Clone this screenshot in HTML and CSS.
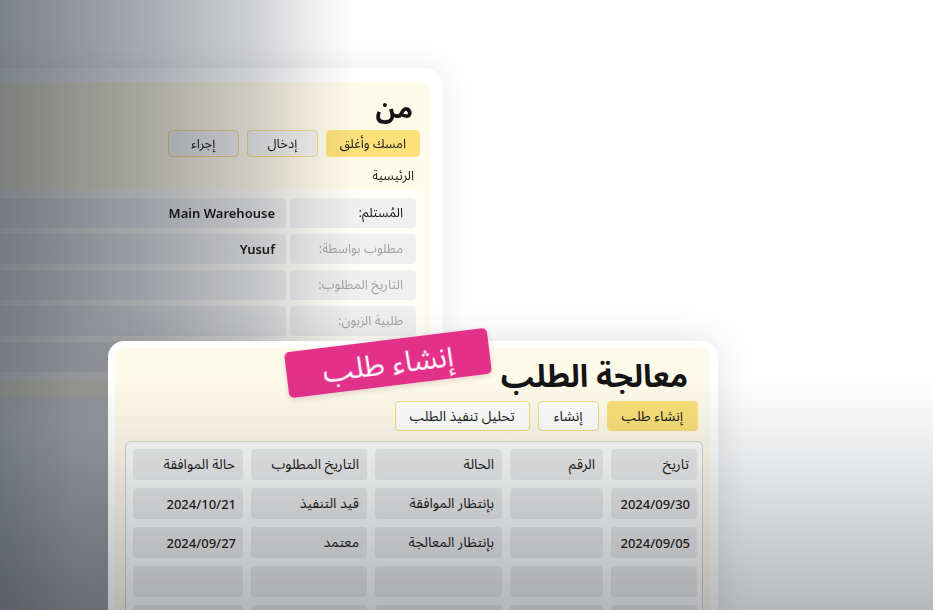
FILE: index.html
```html
<!DOCTYPE html>
<html lang="ar" dir="rtl">
<head>
<meta charset="utf-8">
<title>معالجة الطلب</title>
<link rel="stylesheet" href="styles.css">
</head>
<body>
<div class="stage">
  <section class="window window-back">
    <div class="panel panel-back">
      <h1 class="title title-sm">من</h1>
      <div class="actions actions-sm">
        <span class="btn btn-primary">امسك وأغلق</span>
        <span class="btn btn-muted">إدخال</span>
        <span class="btn btn-muted">إجراء</span>
      </div>
      <div class="section-label">الرئيسية</div>
      <div class="form">
        <div class="form-row">
          <div class="form-label form-label-strong">المُستلم:</div>
          <div class="form-value">Main Warehouse</div>
        </div>
        <div class="form-row">
          <div class="form-label">مطلوب بواسطة:</div>
          <div class="form-value">Yusuf</div>
        </div>
        <div class="form-row">
          <div class="form-label">التاريخ المطلوب:</div>
          <div class="form-value"></div>
        </div>
        <div class="form-row">
          <div class="form-label">طلبية الزبون:</div>
          <div class="form-value"></div>
        </div>
        <div class="form-row">
          <div class="form-label"></div>
          <div class="form-value"></div>
        </div>
      </div>
    </div>
  </section>

  <div class="shade-left"></div>

  <section class="window window-front">
    <div class="panel panel-front">
      <h1 class="title title-lg">معالجة الطلب</h1>
      <div class="actions actions-lg">
        <span class="btn btn-primary">إنشاء طلب</span>
        <span class="btn btn-outline">إنشاء</span>
        <span class="btn btn-outline">تحليل تنفيذ الطلب</span>
      </div>
      <div class="table">
        <div class="cell">تاريخ</div>
        <div class="cell">الرقم</div>
        <div class="cell">الحالة</div>
        <div class="cell">التاريخ المطلوب</div>
        <div class="cell">حالة الموافقة</div>

        <div class="cell cell-num">2024/09/30</div>
        <div class="cell"></div>
        <div class="cell">بإنتظار الموافقة</div>
        <div class="cell">قيد التنفيذ</div>
        <div class="cell cell-num">2024/10/21</div>

        <div class="cell cell-num">2024/09/05</div>
        <div class="cell"></div>
        <div class="cell">بإنتظار المعالجة</div>
        <div class="cell">معتمد</div>
        <div class="cell cell-num">2024/09/27</div>

        <div class="cell"></div>
        <div class="cell"></div>
        <div class="cell"></div>
        <div class="cell"></div>
        <div class="cell"></div>

        <div class="cell"></div>
        <div class="cell"></div>
        <div class="cell"></div>
        <div class="cell"></div>
        <div class="cell"></div>
      </div>
    </div>
  </section>

  <div class="badge">إنشاء طلب</div>

  <div class="shade-bottom"></div>
</div>
</body>
</html>
```

FILE: styles.css
```css
* {
  box-sizing: border-box;
}

html, body {
  margin: 0;
  padding: 0;
  background: #ffffff;
}

body {
  font-family: "Noto Sans", "Noto Sans Arabic", "DejaVu Sans", sans-serif;
  color: #1c1c1c;
}

.stage {
  position: relative;
  width: 933px;
  height: 610px;
  overflow: hidden;
  background: #ffffff;
  isolation: isolate;
}

/* ---------- windows ---------- */
.window {
  position: absolute;
  background: #ffffff;
}

.window-back {
  left: -320px;
  top: 68px;
  width: 763px;
  height: 330px;
  padding: 14px 13px 0 13px;
  border-radius: 18px;
  box-shadow: 0 0 30px rgba(40, 44, 52, 0.10);
}

.window-front {
  left: 108px;
  top: 341px;
  width: 610px;
  height: 300px;
  padding: 7px;
  border-radius: 16px;
  box-shadow: 0 0 36px rgba(40, 44, 52, 0.14);
}

.panel {
  background: #fffbea;
  border-radius: 10px;
  height: 100%;
}

.panel-back {
  padding: 0 10px 0 10px;
  display: flex;
  flex-direction: column;
}

.panel-front {
  padding: 0 8px 0 10px;
  display: flex;
  flex-direction: column;
}

/* ---------- titles ---------- */
.title {
  margin: 0;
  font-weight: 700;
  color: #151515;
}

.title-sm {
  font-size: 27px;
  line-height: 40px;
  padding-top: 6px;
  padding-right: 7px;
}

.title-lg {
  font-size: 31px;
  line-height: 44px;
  padding-top: 5px;
  padding-right: 15px;
}

/* ---------- buttons ---------- */
.actions {
  display: flex;
  gap: 8px;
}

.actions-sm {
  margin-top: 2px;
}

.actions-lg {
  margin-top: 4px;
  padding-right: 5px;
}

.btn {
  display: inline-flex;
  align-items: center;
  justify-content: center;
  border: 1px solid #f4dc86;
  border-radius: 4px;
  white-space: nowrap;
  color: #1c1c1c;
}

.actions-sm .btn {
  height: 27px;
  min-width: 71px;
  padding: 0 13px;
  font-size: 13px;
}

.actions-lg .btn {
  height: 30px;
  min-width: 61px;
  padding: 0 14px;
  font-size: 14px;
}

.btn-primary {
  background: #fce17a;
  border-color: #fce17a;
}

.btn-muted {
  background: #f3f3f2;
}

.btn-outline {
  background: #ffffff;
}

/* ---------- back form ---------- */
.section-label {
  margin-top: 8px;
  padding-right: 6px;
  font-size: 13px;
  line-height: 20px;
  color: #1c1c1c;
}

.form {
  margin-top: 5px;
  margin-right: -5px;
  background: #fffdf7;
  border-radius: 7px;
  padding: 8px 9px 8px 9px;
  display: flex;
  flex-direction: column;
  gap: 6px;
  width: calc(100% + 5px);
}

.form-row {
  display: flex;
  gap: 4px;
  height: 30px;
}

.form-label,
.form-value {
  background: #efefef;
  border-radius: 4px;
  display: flex;
  align-items: center;
  font-size: 13px;
}

.form-label {
  width: 126px;
  flex: none;
  padding-right: 13px;
  color: #a3a3a3;
}

.form-label-strong {
  color: #1c1c1c;
}

.form-value {
  flex: 1;
  padding-right: 11px;
  font-weight: 600;
  color: #1c1c1c;
}

/* ---------- front table ---------- */
.table {
  margin-top: 10px;
  border: 1px solid #d5d5d5;
  border-radius: 6px;
  background: #fdfdfc;
  padding: 7px 5px 7px 7px;
  display: grid;
  grid-template-columns: 86px 93px 127px 116px 1fr;
  grid-auto-rows: 31px;
  gap: 8px;
  flex: 1;
}

.cell {
  background: #ececec;
  border-radius: 4px;
  display: flex;
  align-items: center;
  padding: 0 8px;
  font-size: 14px;
  color: #1f1f1f;
  white-space: nowrap;
}

.cell-num {
  font-size: 13px;
  font-weight: 500;
  direction: ltr;
  justify-content: flex-end;
  padding: 0 7px;
}

/* ---------- badge ---------- */
.badge {
  position: absolute;
  left: 286px;
  top: 340px;
  width: 204px;
  height: 46px;
  transform: rotate(-7deg);
  background: #e3318a;
  border-radius: 5px;
  color: #ffffff;
  font-size: 30px;
  line-height: 46px;
  text-align: center;
  box-shadow: 0 2px 6px rgba(120, 20, 70, 0.18);
}

/* ---------- overlays ---------- */
.shade-left {
  position: absolute;
  inset: 0;
  pointer-events: none;
  mix-blend-mode: multiply;
  background: linear-gradient(to right,
    rgb(125, 129, 137) 0%,
    rgb(150, 153, 159) 9%,
    rgb(172, 175, 180) 17%,
    rgb(207, 208, 211) 27%,
    rgb(240, 240, 241) 34%,
    rgb(255, 255, 255) 38%);
}

.shade-bottom {
  position: absolute;
  inset: 0;
  pointer-events: none;
  mix-blend-mode: multiply;
  background: linear-gradient(to bottom,
    rgb(255, 255, 255) 0%,
    rgb(255, 255, 255) 62%,
    rgb(234, 235, 236) 74%,
    rgb(182, 184, 188) 100%);
}
```
